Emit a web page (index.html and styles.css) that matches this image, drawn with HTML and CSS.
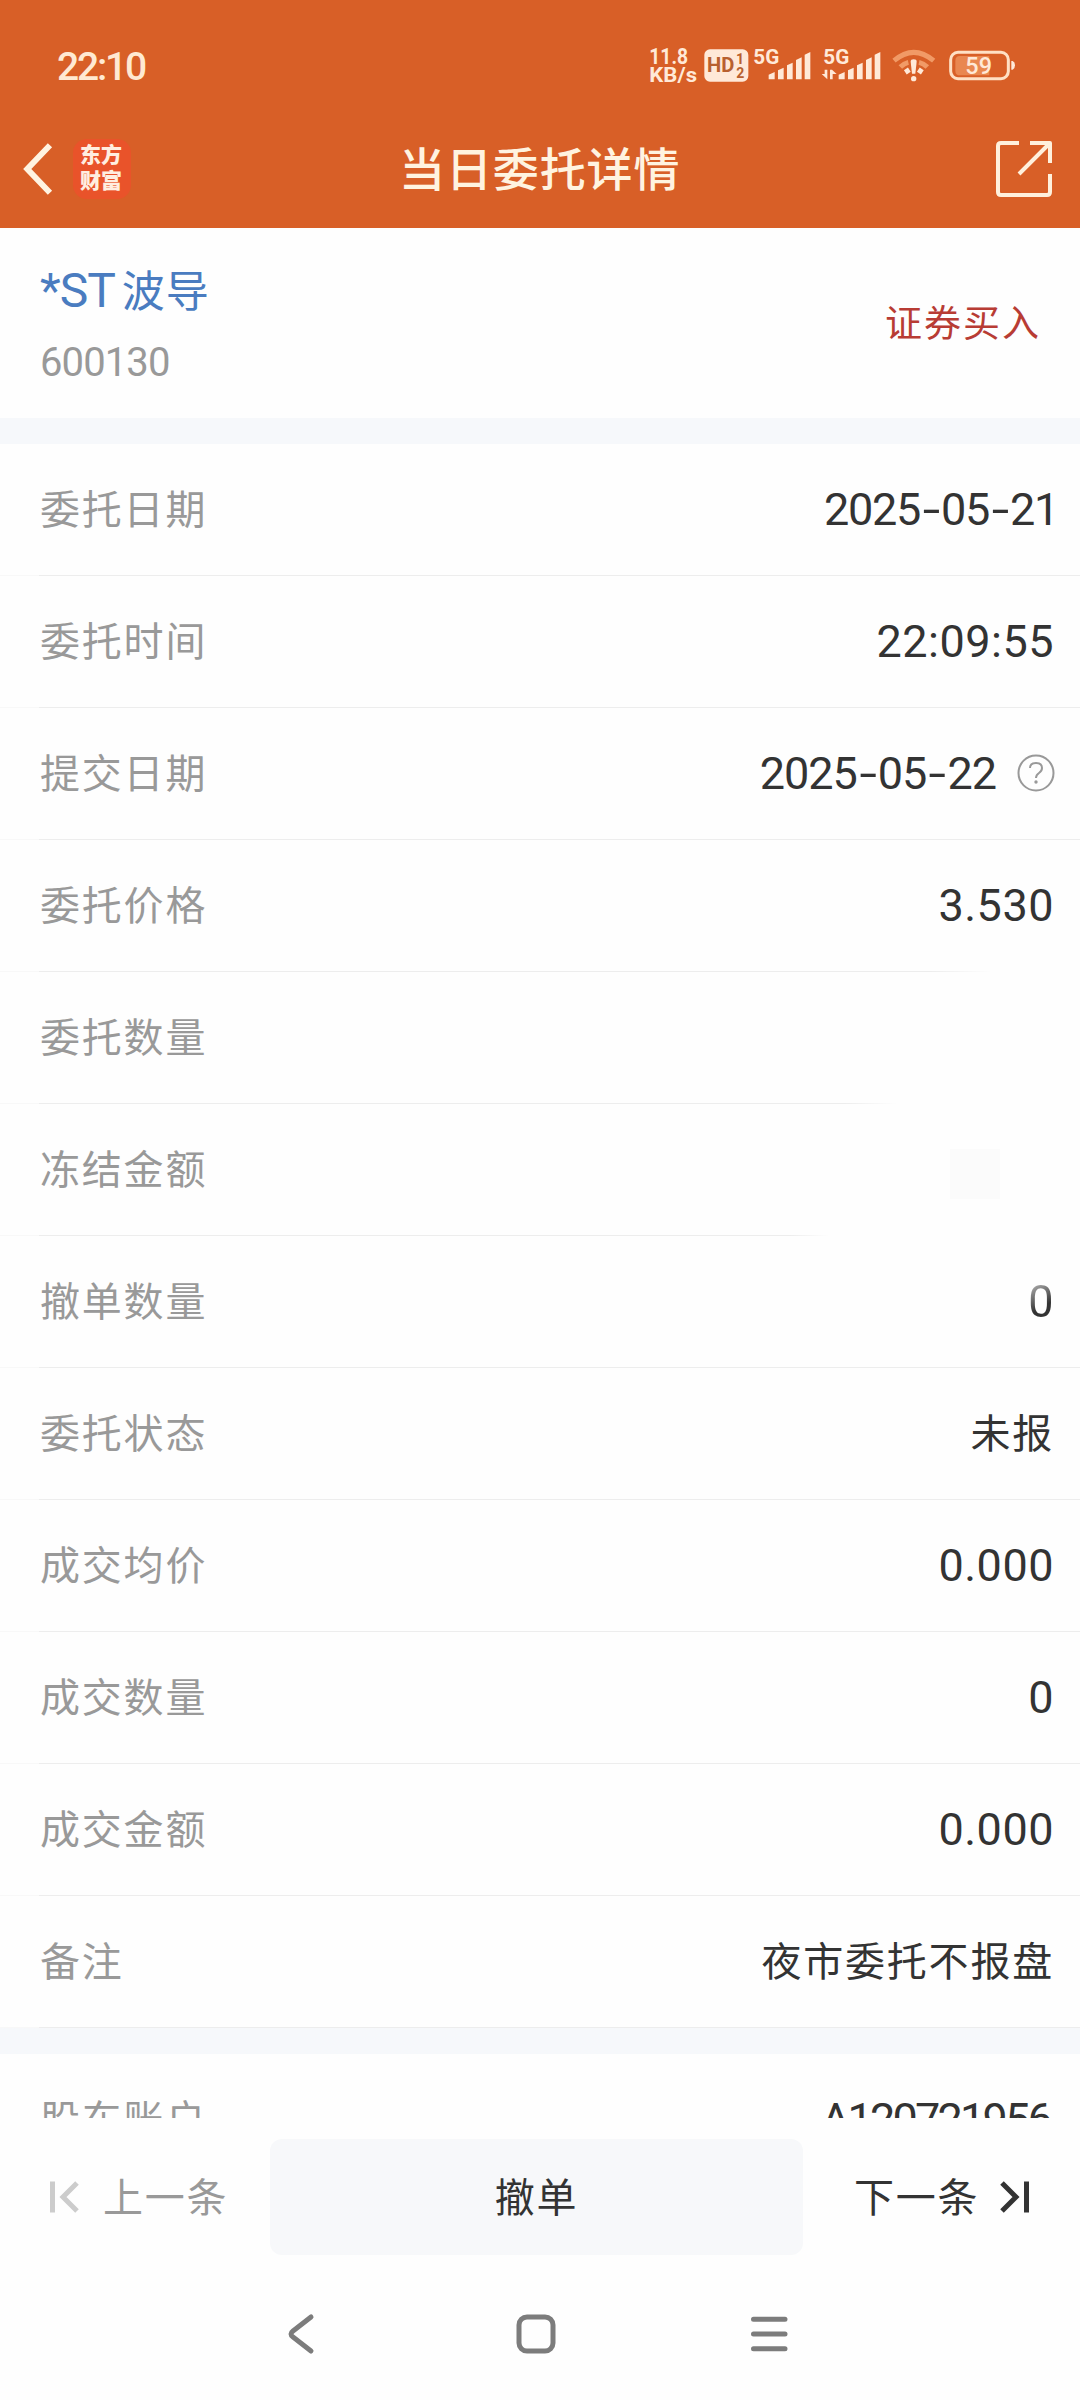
FILE: index.html
```html
<!DOCTYPE html>
<html lang="zh-CN">
<head>
    <meta charset="UTF-8">
    <meta name="viewport" content="width=device-width, initial-scale=1.0">
    <title>当日委托详情</title>
    <link rel="stylesheet" href="styles.css">
</head>
<body>
    <header class="header">
        <div class="status-bar">
            <span class="clock">22:10</span>
            <svg class="status-icons" viewBox="0 0 1380 330">
                <!-- 网速 -->
                <text x="88" y="133" font-size="65" font-weight="700" textLength="116" lengthAdjust="spacingAndGlyphs">11.8</text>
                <text x="88" y="187" font-size="61" font-weight="700" textLength="143" lengthAdjust="spacingAndGlyphs">KB/s</text>
                <!-- HD -->
                <rect x="253" y="88" width="132" height="97" rx="17"/>
                <text class="dark" x="261" y="156" font-size="60" font-weight="700" textLength="82" lengthAdjust="spacingAndGlyphs">HD</text>
                <text class="dark" x="348" y="132" font-size="42" font-weight="700">1</text>
                <text class="dark" x="349" y="174" font-size="42" font-weight="700">2</text>
                <!-- 信号 -->
                <text x="400" y="133" font-size="62" font-weight="700" textLength="78" lengthAdjust="spacingAndGlyphs">5G</text>
                <path d="M446 164l18-8v22h-18zM474 151l17-8v35h-17zM501 136l17-8v50h-17zM528 120l17-8v66h-17zM554 104l17-8v82h-17z"/>
                <text x="610" y="133" font-size="62" font-weight="700" textLength="78" lengthAdjust="spacingAndGlyphs">5G</text>
                <path d="M656 164l18-8v22h-18zM684 151l17-8v35h-17zM711 136l17-8v50h-17zM738 120l17-8v66h-17zM764 104l17-8v82h-17z"/>
                <path d="M614 149h8v29l-17-16h9zM630 178v-29h6l14 13h-12v16z"/>
                <!-- WiFi -->
                <g class="wave">
                    <path class="faint" d="M822 122Q881 72 941 122"/>
                    <path class="faint" d="M841 141Q852 130 865 127M897 127Q911 130 922 141"/>
                    <path d="M856 157L868 149M895 149L907 157"/>
                </g>
                <path d="M872 125q0-7 9-7t9 7l-4 36h-10z"/>
                <circle cx="881" cy="176" r="8"/>
                <!-- 电量 -->
                <rect class="battery" x="992" y="97" width="173" height="79" rx="22"/>
                <path class="charge" d="M1020 108H1108V166H1020Q1006 166 1006 152V122Q1006 108 1020 108z"/>
                <path d="M1174 123h4q7 3 7 13t-7 13h-4z"/>
                <text x="1036" y="163" font-size="73" font-weight="500" textLength="80" lengthAdjust="spacingAndGlyphs">59</text>
            </svg>
        </div>
        <div class="app-bar">
            <svg class="back" viewBox="0 0 30 50"><path d="M27 3L6 25L27 47"/></svg>
            <div class="logo">东方<br>财富</div>
            <h1>当日委托详情</h1>
            <svg class="share" viewBox="0 0 60 60"><path d="M25 4H7Q4 4 4 7V53Q4 56 7 56H53Q56 56 56 53V35M36 4H56V24M56 4L25 35"/></svg>
        </div>
    </header>

    <section class="stock">
        <div>
            <div class="stock-name"><span class="st">*ST</span>波导</div>
            <div class="stock-code">600130</div>
        </div>
        <div class="side">证券买入</div>
    </section>

    <main class="details">
        <div class="row"><span class="label">委托日期</span><span class="num date ends-one">2025<i>-</i>05<i>-</i>21</span></div>
        <div class="row"><span class="label">委托时间</span><span class="num">22:09:55</span></div>
        <div class="row">
            <span class="label">提交日期</span>
            <span class="num date">2025<i>-</i>05<i>-</i>22</span>
            <svg class="help" viewBox="0 0 38 38"><circle cx="19" cy="19" r="17.5"/><path d="M13 14Q13 9 19 9Q25 9 25 14Q25 17 22 19Q19 21 19 24"/><circle class="dot" cx="19" cy="28" r="1.7"/></svg>
        </div>
        <div class="row fade-a"><span class="label">委托价格</span><span class="num">3.530</span></div>
        <div class="row fade-b"><span class="label">委托数量</span></div>
        <div class="row fade-c"><span class="label">冻结金额</span><span class="block"></span></div>
        <div class="row"><span class="label">撤单数量</span><span class="num worn">0</span></div>
        <div class="row"><span class="label">委托状态</span><span class="text">未报</span></div>
        <div class="row"><span class="label">成交均价</span><span class="num">0.000</span></div>
        <div class="row"><span class="label">成交数量</span><span class="num">0</span></div>
        <div class="row"><span class="label">成交金额</span><span class="num">0.000</span></div>
        <div class="row"><span class="label">备注</span><span class="text">夜市委托不报盘</span></div>
        <div class="gap"></div>
        <div class="row"><span class="label">股东账户</span><span class="num account">A120721956</span></div>
    </main>

    <footer class="actions">
        <div class="prev">
            <svg viewBox="0 0 30 34"><path d="M3.5 1.5V32.5M28 3L14 17L28 31"/></svg>
            <span>上一条</span>
        </div>
        <button><span>撤单</span></button>
        <div class="next">
            <span>下一条</span>
            <svg viewBox="0 0 30 34"><path d="M26.5 1.5V32.5M2 3L16 17L2 31"/></svg>
        </div>
    </footer>

    <nav class="nav-bar">
        <svg viewBox="0 0 44 44"><path d="M31 5L13 19Q9 22 13 25L31 39"/></svg>
        <svg viewBox="0 0 44 44"><rect x="5" y="5" width="34" height="34" rx="8"/></svg>
        <svg viewBox="0 0 44 44"><path d="M5.5 7.3H37M5.5 22H37M5.5 36.7H37"/></svg>
    </nav>
</body>
</html>
```
FILE: styles.css
```css
* {
    box-sizing: border-box;
}

body {
    width: 1080px;
    height: 2400px;
    margin: 0;
    display: flex;
    flex-direction: column;
    overflow: hidden;
    background-color: #fefefe;
    color: #333;
    font-family: Roboto, "Noto Sans CJK SC", sans-serif;
}

svg {
    display: block;
    flex: none;
    fill: none;
}

/* 顶部 */
.header {
    height: 228px;
    flex: none;
    background-color: #d85f27;
    color: #fff3e0;
}

.status-bar {
    height: 130px;
    display: flex;
    justify-content: space-between;
    align-items: center;
    padding-left: 57px;
}

.clock {
    padding-top: 3px;
    font-size: 39px;
    font-weight: 500;
    letter-spacing: -2.2px;
    color: #ffe9d2;
}

.status-icons {
    width: 460px;
    height: 110px;
    margin-top: 20px;
    fill: #ffe9d8;
}

.status-icons .dark {
    fill: #b8602f;
}

.wave {
    fill: none;
    stroke: #ffe9d8;
    stroke-width: 15;
}

.wave .faint {
    stroke: #f19a66;
}

.battery {
    fill: none;
    stroke: #ffe0c4;
    stroke-width: 9;
}

.charge {
    fill: #e98750;
}

.app-bar {
    height: 98px;
    display: flex;
    align-items: center;
    padding: 0 26px 20px 20px;
}

.back {
    width: 34px;
    height: 54px;
    stroke: #fff3e0;
    stroke-width: 5.5;
}

.logo {
    width: 58px;
    height: 60px;
    margin-left: 19px;
    padding: 3px 0 0 7px;
    border-radius: 14px;
    background-color: #e9532a;
    color: #ffeee0;
    font-size: 21px;
    font-weight: 900;
    line-height: 26px;
}

h1 {
    flex: 1;
    margin: 1px 0 0 268px;
    font-size: 46px;
    font-weight: 500;
    letter-spacing: 0.9px;
    line-height: 60px;
}

.share {
    width: 60px;
    height: 60px;
    stroke: #fff0dc;
    stroke-width: 4;
    stroke-linejoin: round;
}

/* 股票 */
.stock {
    height: 190px;
    flex: none;
    display: flex;
    justify-content: space-between;
    padding: 32px 39px 0 40px;
}

.stock-name {
    height: 62px;
    font-size: 43px;
    letter-spacing: 1px;
    line-height: 62px;
    color: #4a7cc0;
}

.st {
    margin-right: 7px;
    font-size: 48px;
    letter-spacing: -1px;
}

.stock-code {
    margin-top: 16px;
    font-size: 40px;
    letter-spacing: -0.9px;
    line-height: 50px;
    color: #999;
}

.side {
    margin-top: 37px;
    font-size: 37px;
    letter-spacing: 2px;
    line-height: 56px;
    color: #b83c34;
}

/* 委托明细 */
.details {
    height: 1700px;
    flex: none;
    overflow: hidden;
    border-top: 26px solid #f6f8fb;
}

.row {
    height: 132px;
    display: flex;
    align-items: center;
    padding: 0 26px 3px 40px;
    background: linear-gradient(to right, #f8f8f8 39px, #ededed 39px) bottom / 100% 1px no-repeat;
}

/* 分隔线右侧渐隐 */
.fade-a {
    background-image: linear-gradient(to right, #f8f8f8 39px, #ededed 39px, #ededed 930px, transparent 992px);
}

.fade-b {
    background-image: linear-gradient(to right, #f8f8f8 39px, #ededed 39px, #ededed 845px, transparent 897px);
}

.fade-c {
    background-image: linear-gradient(to right, #f8f8f8 39px, #ededed 39px, #ededed 790px, transparent 829px);
}

.label,
.text {
    padding-bottom: 4px;
    font-size: 40px;
    letter-spacing: 1.8px;
}

.label {
    flex: 1;
    color: #999;
}

.num {
    padding-top: 1px;
    font-size: 45px;
    letter-spacing: 0.5px;
}

.date {
    letter-spacing: -1px;
}

.date i {
    display: inline-block;
    width: 21px;
    font-style: normal;
    text-align: center;
    transform: scaleX(1.4);
}

.ends-one {
    margin-right: -4px;
    letter-spacing: -1.3px;
}

.account {
    margin-right: 4px;
    letter-spacing: -2.8px;
}

.help {
    width: 38px;
    height: 38px;
    margin: 1px -1px 0 21px;
    stroke: #999;
    stroke-width: 2;
}

.help .dot {
    fill: #999;
    stroke: none;
}

.block {
    width: 50px;
    height: 50px;
    margin: 11px 54px 0 0;
    background-color: #fbfbfb;
}

.worn {
    background: linear-gradient(150deg, #aaa 20%, #333 60%);
    -webkit-background-clip: text;
    background-clip: text;
    color: transparent;
}

.gap {
    height: 26px;
    background-color: #f6f8fb;
}

/* 底部操作 */
.actions {
    height: 158px;
    flex: none;
    display: flex;
    align-items: flex-start;
    padding-top: 21px;
    background-color: #fefefe;
    font-size: 40px;
    letter-spacing: 1.8px;
}

.actions span {
    display: block;
    padding-bottom: 4px;
}

.actions svg {
    width: 30px;
    height: 34px;
    stroke: currentColor;
    stroke-width: 5;
}

.prev,
.next {
    height: 116px;
    display: flex;
    align-items: center;
}

.prev {
    width: 270px;
    padding-left: 49px;
    color: #999;
}

.prev svg {
    margin-right: 24px;
    color: #ccc;
}

.actions button {
    width: 533px;
    height: 116px;
    padding: 0;
    border: none;
    border-radius: 12px;
    background-color: #f7f8fa;
    color: #333;
    font: inherit;
    letter-spacing: inherit;
}

.next {
    padding-left: 51px;
}

.next svg {
    margin-left: 21px;
}

/* 系统导航 */
.nav-bar {
    display: flex;
    gap: 190px;
    padding: 36px 0 0 280px;
}

.nav-bar svg {
    width: 44px;
    height: 44px;
    stroke: #7c7c7c;
    stroke-width: 5;
    stroke-linecap: round;
}
```
